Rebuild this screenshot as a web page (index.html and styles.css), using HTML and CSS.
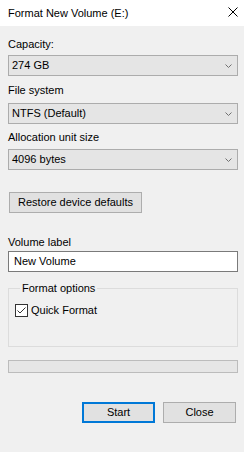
FILE: index.html
```html
<!DOCTYPE html>
<html>
<head>
<meta charset="utf-8">
<link rel="stylesheet" href="styles.css">
</head>
<body>
<div class="window">
  <div class="titlebar">
    <span class="title">Format New Volume (E:)</span>
    <svg class="close" width="10" height="10" viewBox="0 0 10 10"><path d="M0.5 0.5 L9.5 9.5 M9.5 0.5 L0.5 9.5" stroke="#000" stroke-width="1" fill="none"/></svg>
  </div>
  <div class="content">
    <div class="label label-cap">Capacity:</div>
    <div class="combo combo-cap"><span class="combo-text">274 GB</span><svg class="chev" width="7" height="4" viewBox="0 0 7 4"><path d="M0.5 0.5 L3.5 3.5 L6.5 0.5" stroke="#707070" stroke-width="1" fill="none"/></svg></div>
    <div class="label label-fs">File system</div>
    <div class="combo combo-fs"><span class="combo-text">NTFS (Default)</span><svg class="chev" width="7" height="4" viewBox="0 0 7 4"><path d="M0.5 0.5 L3.5 3.5 L6.5 0.5" stroke="#707070" stroke-width="1" fill="none"/></svg></div>
    <div class="label label-au">Allocation unit size</div>
    <div class="combo combo-au"><span class="combo-text">4096 bytes</span><svg class="chev" width="7" height="4" viewBox="0 0 7 4"><path d="M0.5 0.5 L3.5 3.5 L6.5 0.5" stroke="#707070" stroke-width="1" fill="none"/></svg></div>
    <div class="btn btn-restore">Restore device defaults</div>
    <div class="label label-vol">Volume label</div>
    <div class="textbox">New Volume</div>
    <fieldset class="group">
      <legend class="legend">Format options</legend>
      <div class="check-row">
        <svg class="checkbox" width="13" height="13" viewBox="0 0 13 13"><rect x="0.5" y="0.5" width="12" height="12" fill="#fff" stroke="#333"/><path d="M2.5 6.5 L5 9 L10.5 3.5" stroke="#333" stroke-width="1" fill="none"/></svg>
        <span class="check-label">Quick Format</span>
      </div>
    </fieldset>
    <div class="progress"></div>
    <div class="actions">
      <div class="btn btn-action btn-default">Start</div>
      <div class="btn btn-action">Close</div>
    </div>
  </div>
</div>
</body>
</html>
```
FILE: styles.css
```css
* { box-sizing: border-box; }
html, body { margin: 0; padding: 0; }
body {
  width: 244px;
  height: 452px;
  background: #f0f0f0;
  font-family: "Liberation Sans", Arial, sans-serif;
  font-size: 11px;
  line-height: 15px;
  color: #000;
  overflow: hidden;
}
.window { width: 244px; height: 452px; display: flex; flex-direction: column; }
.titlebar {
  height: 26px;
  background: #fff;
  display: flex;
  justify-content: space-between;
  align-items: flex-start;
  padding-left: 8px;
  padding-right: 6px;
}
.title { margin-top: 6px; }
.close { margin-top: 7px; display: block; }
.content { display: flex; flex-direction: column; padding: 0 6px 0 8px; }
.label { height: 15px; }
.label-cap { margin-top: 11px; }
.label-fs { margin-top: 7px; }
.label-au { margin-top: 6px; }
.label-vol { margin-top: 22px; }
.combo {
  height: 21px;
  background: #e5e5e5;
  border: 1px solid #acacac;
  display: flex;
  align-items: center;
  justify-content: space-between;
  padding: 0 5px 0 3px;
}
.chev { display: block; }
.combo-cap { margin-top: 3px; }
.combo-fs { margin-top: 5px; }
.combo-au { margin-top: 4px; }
.btn {
  height: 21px;
  background: #e1e1e1;
  border: 1px solid #adadad;
  display: flex;
  align-items: center;
  justify-content: center;
}
.btn-restore { width: 133px; margin: 22px 0 0 1px; }
.textbox {
  margin-top: 1px;
  height: 21px;
  background: #fff;
  border: 1px solid #7a7a7a;
  display: flex;
  align-items: center;
  padding-left: 5px;
}
.group {
  margin: 9px 0 0 0;
  padding: 7px 6px 28px 6px;
  border: 1px solid #dcdcdc;
  min-width: 0;
}
.legend { padding: 0 2px; margin-left: 5px; line-height: 15px; }
.check-row { display: flex; align-items: center; height: 15px; gap: 3px; margin-left: 0; }
.checkbox { display: block; }
.progress {
  margin-top: 13px;
  height: 13px;
  background: #e6e6e6;
  border: 1px solid #bcbcbc;
}
.actions {
  margin-top: 29px;
  display: flex;
  justify-content: flex-end;
  gap: 8px;
  padding-right: 2px;
}
.btn-action { width: 73px; }
.btn-default { border: 2px solid #0078d7; }
```
